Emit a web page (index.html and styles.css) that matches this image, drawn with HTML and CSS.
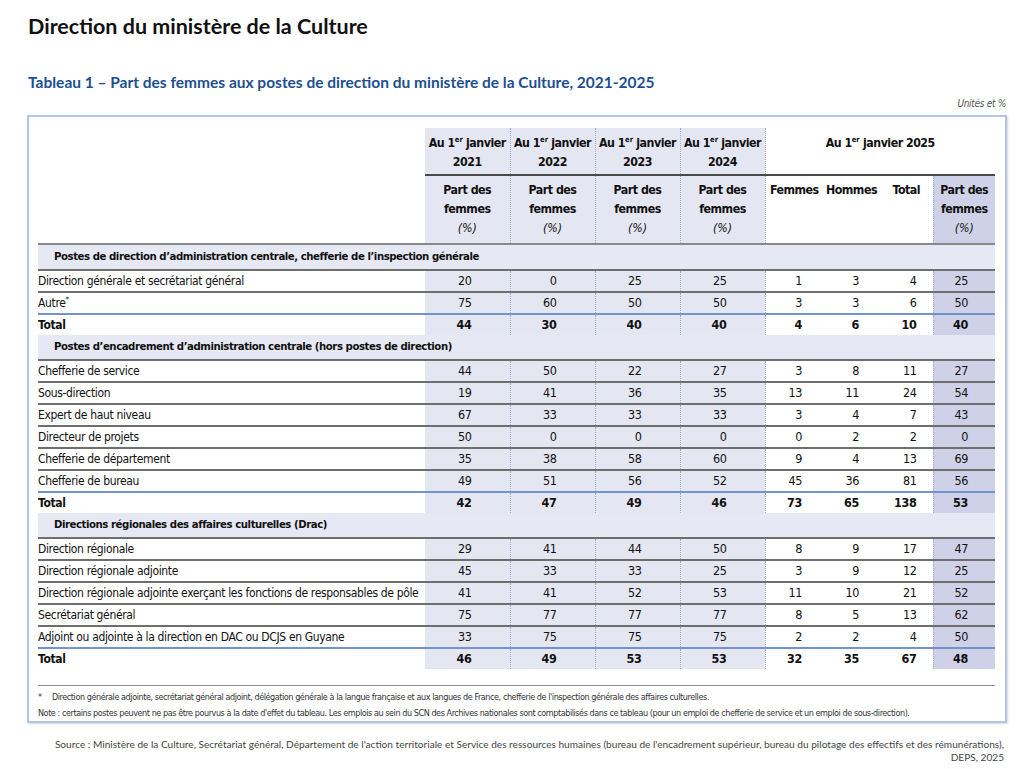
FILE: index.html
```html
<!DOCTYPE html>
<html lang="fr">
<head>
<meta charset="utf-8">
<title>Direction du ministère de la Culture</title>
<link rel="stylesheet" href="styles.css">
</head>
<body>
<div class="page">
  <h1 class="title">Direction du ministère de la Culture</h1>
  <h2 class="subtitle">Tableau 1 – Part des femmes aux postes de direction du ministère de la Culture, 2021-2025</h2>
  <div class="units">Unités et %</div>
  <div class="box">
    <table class="tbl">
      <colgroup>
        <col class="c-lab"><col class="c-y"><col class="c-y"><col class="c-y"><col class="c-y">
        <col class="c-f"><col class="c-h"><col class="c-t"><col class="c-p">
      </colgroup>
      <thead>
        <tr class="h1">
          <th rowspan="2" class="blank"></th>
          <th class="y">Au 1<sup>er</sup> janvier<br>2021</th>
          <th class="y dl">Au 1<sup>er</sup> janvier<br>2022</th>
          <th class="y dl">Au 1<sup>er</sup> janvier<br>2023</th>
          <th class="y dl">Au 1<sup>er</sup> janvier<br>2024</th>
          <th colspan="4" class="g25 dl">Au 1<sup>er</sup> janvier 2025</th>
        </tr>
        <tr class="h2">
          <th class="y">Part des<br>femmes<br><i>(%)</i></th>
          <th class="y dl">Part des<br>femmes<br><i>(%)</i></th>
          <th class="y dl">Part des<br>femmes<br><i>(%)</i></th>
          <th class="y dl">Part des<br>femmes<br><i>(%)</i></th>
          <th class="n dl">Femmes</th>
          <th class="n">Hommes</th>
          <th class="n">Total</th>
          <th class="p dl">Part des<br>femmes<br><i>(%)</i></th>
        </tr>
      </thead>
      <tbody>
        <tr class="sec"><td colspan="9">Postes de direction d’administration centrale, chefferie de l’inspection générale</td></tr>
        <tr><td class="lab">Direction générale et secrétariat général</td><td class="y">20</td><td class="y dl">0</td><td class="y dl">25</td><td class="y dl">25</td><td class="f dl">1</td><td class="h">3</td><td class="t">4</td><td class="p dl">25</td></tr>
        <tr><td class="lab">Autre<sup class="ast">*</sup></td><td class="y">75</td><td class="y dl">60</td><td class="y dl">50</td><td class="y dl">50</td><td class="f dl">3</td><td class="h">3</td><td class="t">6</td><td class="p dl">50</td></tr>
        <tr class="tot"><td class="lab">Total</td><td class="y">44</td><td class="y dl">30</td><td class="y dl">40</td><td class="y dl">40</td><td class="f dl">4</td><td class="h">6</td><td class="t">10</td><td class="p dl">40</td></tr>
        <tr class="sec"><td colspan="9">Postes d’encadrement d’administration centrale (hors postes de direction)</td></tr>
        <tr><td class="lab">Chefferie de service</td><td class="y">44</td><td class="y dl">50</td><td class="y dl">22</td><td class="y dl">27</td><td class="f dl">3</td><td class="h">8</td><td class="t">11</td><td class="p dl">27</td></tr>
        <tr><td class="lab">Sous-direction</td><td class="y">19</td><td class="y dl">41</td><td class="y dl">36</td><td class="y dl">35</td><td class="f dl">13</td><td class="h">11</td><td class="t">24</td><td class="p dl">54</td></tr>
        <tr><td class="lab">Expert de haut niveau</td><td class="y">67</td><td class="y dl">33</td><td class="y dl">33</td><td class="y dl">33</td><td class="f dl">3</td><td class="h">4</td><td class="t">7</td><td class="p dl">43</td></tr>
        <tr><td class="lab">Directeur de projets</td><td class="y">50</td><td class="y dl">0</td><td class="y dl">0</td><td class="y dl">0</td><td class="f dl">0</td><td class="h">2</td><td class="t">2</td><td class="p dl">0</td></tr>
        <tr><td class="lab">Chefferie de département</td><td class="y">35</td><td class="y dl">38</td><td class="y dl">58</td><td class="y dl">60</td><td class="f dl">9</td><td class="h">4</td><td class="t">13</td><td class="p dl">69</td></tr>
        <tr><td class="lab">Chefferie de bureau</td><td class="y">49</td><td class="y dl">51</td><td class="y dl">56</td><td class="y dl">52</td><td class="f dl">45</td><td class="h">36</td><td class="t">81</td><td class="p dl">56</td></tr>
        <tr class="tot"><td class="lab">Total</td><td class="y">42</td><td class="y dl">47</td><td class="y dl">49</td><td class="y dl">46</td><td class="f dl">73</td><td class="h">65</td><td class="t">138</td><td class="p dl">53</td></tr>
        <tr class="sec"><td colspan="9">Directions régionales des affaires culturelles (Drac)</td></tr>
        <tr><td class="lab">Direction régionale</td><td class="y">29</td><td class="y dl">41</td><td class="y dl">44</td><td class="y dl">50</td><td class="f dl">8</td><td class="h">9</td><td class="t">17</td><td class="p dl">47</td></tr>
        <tr><td class="lab">Direction régionale adjointe</td><td class="y">45</td><td class="y dl">33</td><td class="y dl">33</td><td class="y dl">25</td><td class="f dl">3</td><td class="h">9</td><td class="t">12</td><td class="p dl">25</td></tr>
        <tr><td class="lab">Direction régionale adjointe exerçant les fonctions de responsables de pôle</td><td class="y">41</td><td class="y dl">41</td><td class="y dl">52</td><td class="y dl">53</td><td class="f dl">11</td><td class="h">10</td><td class="t">21</td><td class="p dl">52</td></tr>
        <tr><td class="lab">Secrétariat général</td><td class="y">75</td><td class="y dl">77</td><td class="y dl">77</td><td class="y dl">77</td><td class="f dl">8</td><td class="h">5</td><td class="t">13</td><td class="p dl">62</td></tr>
        <tr><td class="lab">Adjoint ou adjointe à la direction en DAC ou DCJS en Guyane</td><td class="y">33</td><td class="y dl">75</td><td class="y dl">75</td><td class="y dl">75</td><td class="f dl">2</td><td class="h">2</td><td class="t">4</td><td class="p dl">50</td></tr>
        <tr class="tot"><td class="lab">Total</td><td class="y">46</td><td class="y dl">49</td><td class="y dl">53</td><td class="y dl">53</td><td class="f dl">32</td><td class="h">35</td><td class="t">67</td><td class="p dl">48</td></tr>
      </tbody>
    </table>
    <div class="notes">
      <p><span class="star">*</span>Direction générale adjointe, secrétariat général adjoint, délégation générale à la langue française et aux langues de France, chefferie de l'inspection générale des affaires culturelles.</p>
      <p>Note : certains postes peuvent ne pas être pourvus à la date d'effet du tableau. Les emplois au sein du SCN des Archives nationales sont comptabilisés dans ce tableau (pour un emploi de chefferie de service et un emploi de sous-direction).</p>
    </div>
  </div>
  <p class="source">Source : Ministère de la Culture, Secrétariat général, Département de l'action territoriale et Service des ressources humaines (bureau de l'encadrement supérieur, bureau du pilotage des effectifs et des rémunérations), DEPS, 2025</p>
</div>
</body>
</html>
```

FILE: styles.css
```css
html, body {
  margin: 0;
  padding: 0;
  background: #ffffff;
}

body {
  color: #111;
  font-family: "DejaVu Sans Condensed", "DejaVu Sans", "Liberation Sans", sans-serif;
}

.page {
  padding: 0 24px 0 27px;
}

.title {
  font-family: Lato, "Liberation Sans", sans-serif;
  font-weight: 700;
  font-size: 21.5px;
  line-height: 26px;
  margin: 0;
  padding: 13px 0 0 1px;
  color: #111;
}

.subtitle {
  font-family: Lato, "Liberation Sans", sans-serif;
  font-weight: 700;
  font-size: 15.5px;
  line-height: 18px;
  margin: 34px 0 0 1px;
  color: #1d4f8f;
}

.units {
  text-align: right;
  font-style: italic;
  font-size: 10px;
  letter-spacing: -0.3px;
  line-height: 14px;
  margin-top: 6px;
  padding-right: 1px;
  color: #555;
}

.box {
  border: 2px solid #b3c5e0;
  box-shadow: 1px 1px 2px rgba(80, 100, 140, 0.25);
  padding: 11px 9px 0 9px;
  margin-top: 4px;
}

.tbl {
  width: 957px;
  border-collapse: collapse;
  table-layout: fixed;
  font-size: 12px;
  letter-spacing: -0.35px;
}

.c-lab { width: 387px; }
.c-y { width: 85px; }
.c-f { width: 58px; }
.c-h { width: 57px; }
.c-t { width: 53px; }
.c-p { width: 62px; }

.tbl th, .tbl td {
  padding: 0;
  white-space: nowrap;
}

.tbl th {
  font-weight: 700;
  font-size: 12.3px;
  text-align: center;
  vertical-align: top;
  line-height: 19px;
  letter-spacing: -0.5px;
}

.tbl th i {
  font-weight: 400;
  letter-spacing: 0;
}

.tbl sup {
  font-size: 7.5px;
  line-height: 0;
  vertical-align: 5px;
  letter-spacing: 0;
}

.h1 th {
  padding: 6px 0 2px;
  border-bottom: 2px solid #4a4a4a;
}

.h1 th.blank {
  border-bottom: 2px solid #8a8a8a;
  background: #fff;
}

.h2 th {
  padding: 5px 0 5px;
  border-bottom: 2px solid #8a8a8a;
}

.y { background: #e4e6f2; }
.p { background: #cfd1e8; }
.g25, .n { background: #fff; }

.dl { border-left: 1px dotted #a3abc6; }

.tbl td {
  line-height: 20px;
  font-size: 12.5px;
  text-align: right;
  border-top: 2px solid #6e6e6e;
}

.tbl td.lab {
  text-align: left;
  font-size: 12px;
  background: #fff;
}

.tbl td.y { padding-right: 38px; }
.tbl td.f { padding-right: 21px; background: #fff; }
.tbl td.h { padding-right: 21px; background: #fff; }
.tbl td.t { padding-right: 16px; background: #fff; }
.tbl td.p { padding-right: 27px; }

.tbl tr.tot td {
  font-weight: 700;
  border-top: 2px solid #7393cc;
}

.tbl tr.sec td {
  border-top: none;
  background: #e6e8f3;
  text-align: left;
  font-weight: 700;
  font-size: 11.3px;
  letter-spacing: -0.45px;
  line-height: 24px;
  padding-left: 16px;
}

.ast {
  font-size: 7px;
}

.notes {
  margin-top: 16px;
  border-top: 1px solid #8f8f8f;
  padding-top: 3px;
  width: 957px;
}

.notes p {
  margin: 0;
  font-size: 9px;
  line-height: 16px;
  letter-spacing: -0.44px;
  color: #333;
  white-space: nowrap;
}

.star {
  display: inline-block;
  width: 14px;
}

.source {
  margin: 15px 3px 0 13px;
  font-family: Lato, "Liberation Sans", sans-serif;
  font-size: 10.1px;
  line-height: 13px;
  text-align: right;
  color: #444;
}
```
